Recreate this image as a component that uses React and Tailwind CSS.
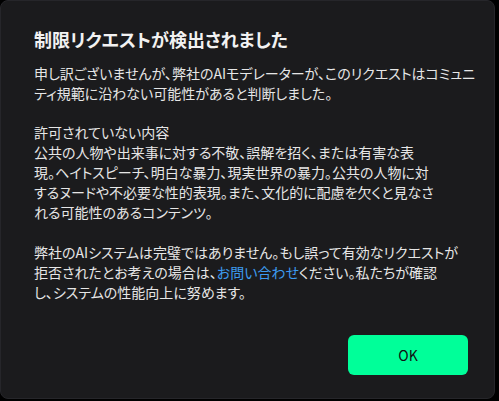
import React from 'react';

const App = () => {
  return (
    <div className="w-[499px] h-[401px] bg-black overflow-hidden">
      <div
        className="w-[495px] h-[399px] bg-[#1b1b1d] rounded-lg border border-[#26262a] flex flex-col pl-[33px] pr-[26px] pt-[25px] pb-[23px] text-[#e6e6e6] [font-feature-settings:'palt']"
        style={{ fontFamily: '"Noto Sans CJK JP", "Noto Sans", sans-serif' }}
      >
        <h2 className="text-[18px] font-bold leading-[26px] text-[#f2f2f2] mb-[11px]">
          制限リクエストが検出されました
        </h2>
        <div className="text-[14px] leading-[20px] whitespace-nowrap">
          <p>
            申し訳ございませんが、弊社のAIモデレーターが、このリクエストはコミュニ
            <br />
            ティ規範に沿わない可能性があると判断しました。
          </p>
          <p className="mt-[19px]">
            許可されていない内容
            <br />
            公共の人物や出来事に対する不敬、誤解を招く、または有害な表
            <br />
            現。ヘイトスピーチ、明白な暴力、現実世界の暴力。公共の人物に対
            <br />
            するヌードや不必要な性的表現。また、文化的に配慮を欠くと見なさ
            <br />
            れる可能性のあるコンテンツ。
          </p>
          <p className="mt-[20px]">
            弊社のAIシステムは完璧ではありません。もし誤って有効なリクエストが
            <br />
            拒否されたとお考えの場合は、
            <span className="text-[#3d9bf0]">お問い合わせ</span>
            ください。私たちが確認
            <br />
            し、システムの性能向上に努めます。
          </p>
        </div>
        <div className="mt-auto flex justify-end">
          <button className="w-[120px] h-[40px] rounded-md bg-[#00ff99] text-[#111] text-[14px] font-normal">
            OK
          </button>
        </div>
      </div>
    </div>
  );
};

export default App;
